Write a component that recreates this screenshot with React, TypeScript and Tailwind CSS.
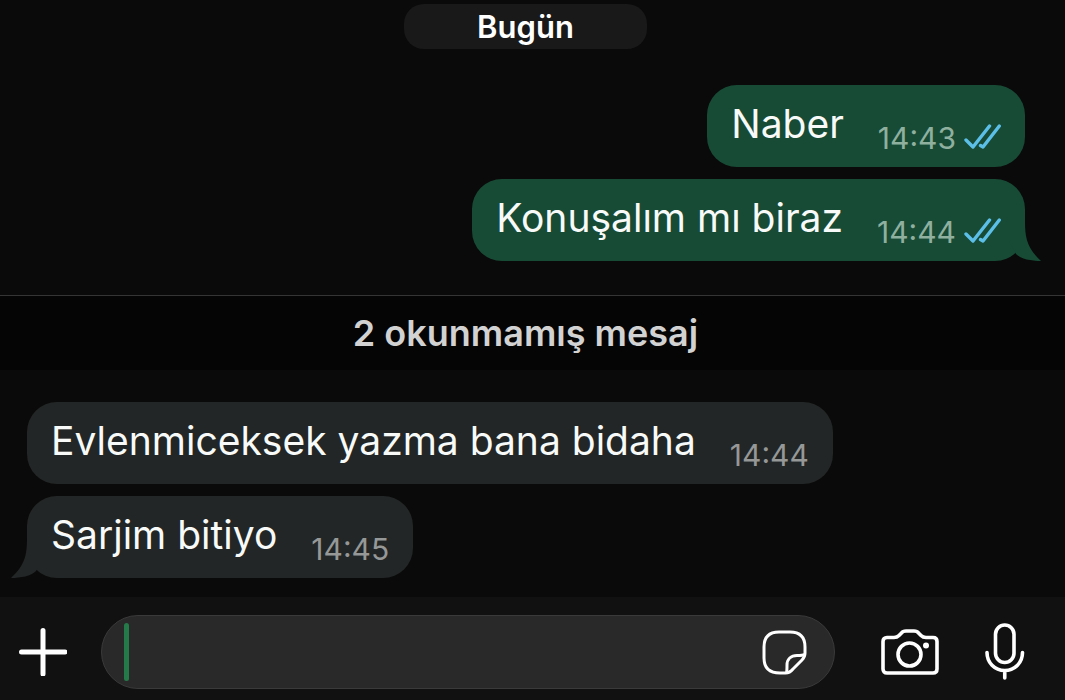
import { useState } from 'react';
import clsx from 'clsx';

type Message = {
  id: number;
  text: string;
  time: string;
  mine?: boolean;
  tail?: boolean;
};

const readMessages: Message[] = [
  { id: 1, text: 'Naber', time: '14:43', mine: true },
  { id: 2, text: 'Konuşalım mı biraz', time: '14:44', mine: true, tail: true },
];

const unreadMessages: Message[] = [
  { id: 3, text: 'Evlenmiceksek yazma bana bidaha', time: '14:44' },
  { id: 4, text: 'Sarjim bitiyo', time: '14:45', tail: true },
];

function Ticks() {
  return (
    <svg className="h-7 w-[37px]" viewBox="0 0 37 28" fill="none" stroke="#5bbfe8" strokeWidth="3.4" strokeLinecap="round" strokeLinejoin="round">
      <path d="M2 16 9 23 25.500 2" />
      <path d="M16.500 21.500 19 23 35.300 2" />
    </svg>
  );
}

function Tail({ mine }: { mine?: boolean }) {
  return (
    <svg
      className={clsx('absolute bottom-0 h-10 w-8', mine ? '-right-4 text-[#174b36]' : '-left-4 -scale-x-100 text-[#232626]')}
      viewBox="0 0 32 40"
      fill="currentColor"
    >
      <path d="M16 0C16 17 18 27 32 40C22 40 12 38 7 33L0 20V0Z" />
    </svg>
  );
}

function Bubble({ message }: { message: Message }) {
  const { text, time, mine, tail } = message;
  return (
    <li
      className={clsx(
        'relative flex h-[82px] items-start gap-[34px] rounded-[30px] px-6',
        mine ? 'self-end bg-[#174b36]' : 'self-start bg-[#232626]'
      )}
    >
      {tail && <Tail mine={mine} />}
      <p className="relative pt-4 text-[39px] leading-[46px] text-[#f7faf8]">{text}</p>
      <div className="relative flex items-center gap-2 pt-9">
        <time className={clsx('text-[30px] leading-[34px]', mine ? 'text-[#8fb09f]' : 'text-[#969898]')}>{time}</time>
        {mine && <Ticks />}
      </div>
    </li>
  );
}

export default function App() {
  const [draft, setDraft] = useState('');

  return (
    <div className="flex min-h-screen flex-col bg-[#0a0a0a] font-['Inter','Liberation_Sans',sans-serif]">
      <main className="flex grow flex-col">
        <div className="flex justify-center pt-1 pr-[14px]">
          <h2 className="w-[243px] rounded-[20px] bg-[#191919] text-center text-[31px] leading-[45px] font-semibold text-white">
            Bugün
          </h2>
        </div>

        <ul className="flex flex-col gap-3 pt-9 pr-10 pb-[34px] pl-[27px]">
          {readMessages.map((m) => (
            <Bubble key={m.id} message={m} />
          ))}
        </ul>

        {/* Unread separator */}
        <div className="border-t border-[#353535] bg-[#050505] pr-[14px] text-center text-[36px] leading-[74px] font-semibold text-[#d2d2d2]">
          2 okunmamış mesaj
        </div>

        <ul className="flex flex-col gap-3 pt-8 pr-10 pb-[18px] pl-[27px]">
          {unreadMessages.map((m) => (
            <Bubble key={m.id} message={m} />
          ))}
        </ul>
      </main>

      {/* Composer */}
      <form className="flex items-center bg-[#111111] pt-[18px] pr-10 pb-[11px] pl-[19px]" onSubmit={(e) => e.preventDefault()}>
        <button type="button" aria-label="Ekle">
          <svg className="size-12" viewBox="0 0 48 48" stroke="white" strokeWidth="5" strokeLinecap="round">
            <path d="M24 2.5V46M2.500 24H46" />
          </svg>
        </button>

        <div className="ml-[34px] flex h-[74px] min-w-0 flex-1 items-center rounded-full border border-[#3a3a3a] bg-[#292929] pr-[27px] pl-[22px]">
          <span className="h-[58px] w-[5px] shrink-0 rounded-full bg-[#257a4a]" />
          <input
            type="text"
            aria-label="Mesaj"
            value={draft}
            onChange={(e) => setDraft(e.target.value)}
            className="min-w-0 flex-1 bg-transparent px-2 text-[39px] text-white caret-[#257a4a] outline-none"
          />
          <button type="button" aria-label="Çıkartma">
            <svg className="size-[45px]" viewBox="0 0 45 45" fill="none" stroke="white" strokeWidth="3" strokeLinejoin="round">
              <path d="M23.5 43H18C7 43 2 38 2 28V17C2 7 7 2 17 2H28C38 2 43 7 43 17V23C43 26 42 28 40 30L31 39C29 41.5 27 43 23.5 43Z" />
              <path d="M24.5 43C25 41 25 38 25 35C25 29 29 25.500 35 25.500C38 25.500 41 25.500 42.500 24.500" />
            </svg>
          </button>
        </div>

        <button type="button" aria-label="Kamera" className="ml-[46px]">
          <svg className="h-[46px] w-[58px]" viewBox="0 0 58 46" fill="none" stroke="white" strokeWidth="3.6" strokeLinejoin="round">
            <path d="M6 8.500H13C15 8.500 16.500 8 18 6.500L20.500 4C21.500 2.500 23 2 25 2H33C35 2 36.500 2.500 37.500 4L40 6.500C41.500 8 43 8.500 45 8.500H52C54.500 8.500 56 10 56 12.500V40C56 42.500 54.500 44 52 44H6C3.500 44 2 42.500 2 40V12.500C2 10 3.500 8.500 6 8.500Z" />
            <circle cx="28.500" cy="25.500" r="11.500" />
            <circle cx="45" cy="16.500" r="3" fill="white" stroke="none" />
          </svg>
        </button>

        <button type="button" aria-label="Sesli mesaj" className="ml-[46px]">
          <svg className="h-[58px] w-10" viewBox="0 0 40 58" fill="none" stroke="white" strokeWidth="3.6" strokeLinecap="round">
            <rect x="10.500" y="2" width="18.500" height="37.500" rx="9.250" />
            <path d="M2 29.500C2 39.500 9.500 47.500 19.750 47.500S37.500 39.500 37.500 29.500M19.750 47.500V55" />
          </svg>
        </button>
      </form>
    </div>
  );
}
